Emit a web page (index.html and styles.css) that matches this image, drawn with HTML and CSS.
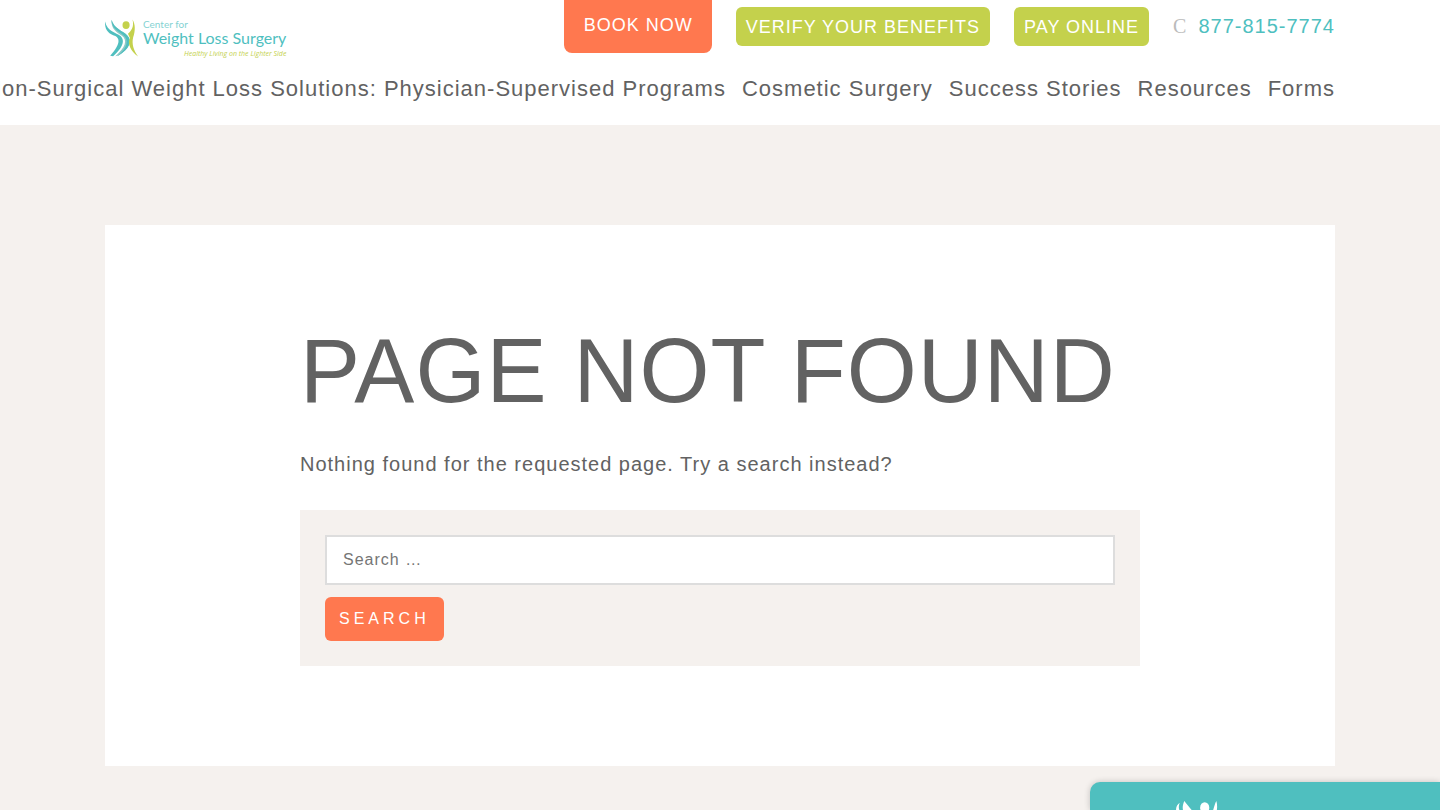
FILE: index.html
```html
<!DOCTYPE html>
<html lang="en">
	<head>
		<meta charset="utf-8">
		<title>Page Not Found</title>
		<link rel="stylesheet" href="styles.css">
	</head>
	<body>
		<header class="header">
			<div class="topbar">
				<a class="logo" href="#">
					<svg class="logo-mark" viewBox="0 0 105 120" aria-hidden="true">
						<path fill="#4fbfbf" d="M0 9C-1 38 12 46 32 54C50 64 42 86 16 115L25 116C52 94 64 69 48 54C34 42 8 42 0 9Z"/>
						<path fill="#8cc9c7" d="M20 4C18 32 36 43 51 52C72 66 62 90 32 116L42 114C74 94 86 70 69 52C56 39 28 32 20 4Z"/>
						<path fill="#4fbfbf" d="M20 4C20 28 38 39 54 49C76 64 70 90 38 116L42 114C74 94 86 70 69 52C56 39 28 32 20 4Z"/>
						<ellipse fill="#c4d14c" cx="65" cy="20" rx="11" ry="12"/>
						<path fill="#c4d14c" d="M85 3C91 28 80 38 71 47L77 60C68 78 80 102 102 117C88 98 82 78 87 58C94 38 94 18 85 3Z"/>
					</svg>
					<span class="logo-text">
						<span class="logo-small">Center for</span>
						<span class="logo-name">Weight Loss Surgery</span>
						<span class="logo-tag">Healthy Living on the Lighter Side</span>
					</span>
				</a>
				<div class="actions">
					<a class="book" href="#">BOOK NOW</a>
					<a class="pill" href="#">VERIFY YOUR BENEFITS</a>
					<a class="pill" href="#">PAY ONLINE</a>
					<a class="phone" href="#"><span class="phone-icon">C</span>877-815-7774</a>
				</div>
			</div>
			<nav class="nav">
				<a href="#">Non-Surgical Weight Loss Solutions: Physician-Supervised Programs</a>
				<a href="#">Cosmetic Surgery</a>
				<a href="#">Success Stories</a>
				<a href="#">Resources</a>
				<a href="#">Forms</a>
			</nav>
		</header>
		<main class="content">
			<div class="inner">
				<h1>PAGE NOT FOUND</h1>
				<p>Nothing found for the requested page. Try a search instead?</p>
				<form class="search">
					<input type="search" placeholder="Search …" aria-label="Search for">
					<button type="submit">SEARCH</button>
				</form>
			</div>
		</main>
		<aside class="chat">
			<svg class="chat-mark" viewBox="0 0 105 120" aria-hidden="true">
				<path fill="#fff" d="M11 4C-6 16 2 42 32 54C50 64 42 86 16 115L25 116C52 94 64 69 48 54C34 42 0 32 11 4Z"/>
				<path fill="#fff" d="M22 0C12 22 22 40 51 52C72 66 62 90 32 116L42 114C72 96 86 70 69 52C56 39 42 26 22 0Z"/>
				<ellipse fill="#fff" cx="71" cy="16" rx="11" ry="13"/>
				<path fill="#fff" d="M99 0C92 10 94 34 71 47L77 60C68 78 80 102 102 117C88 98 82 78 87 58C98 38 104 18 99 0Z"/>
			</svg>
		</aside>
	</body>
</html>
```
FILE: styles.css
```css
*{
	box-sizing: border-box;
}
body{
	margin: 0;
	min-height: 100vh;
	background-color: #f5f1ee;
	color: #626262;
	font-family: "Liberation Sans", Arial, sans-serif;
	font-size: 20px;
	letter-spacing: 1px;
	overflow-x: hidden;
}
a{
	color: inherit;
	text-decoration: none;
}
.header{
	background-color: #fff;
	padding: 0 105px 21px;
}
.topbar{
	display: flex;
	justify-content: space-between;
	align-items: flex-start;
}
.logo{
	display: flex;
	gap: 4px;
	margin-top: 18px;
	letter-spacing: 0;
	white-space: nowrap;
}
.logo-mark{
	width: 34px;
	height: 40px;
}
.logo-text{
	display: flex;
	flex-direction: column;
	font-family: Lato, sans-serif;
	color: #4fbfbf;
}
.logo-small{
	font-size: 10px;
	line-height: 12px;
	opacity: 0.7;
}
.logo-name{
	font-size: 16px;
	line-height: 16px;
}
.logo-tag{
	align-self: flex-end;
	font-family: "Open Sans", sans-serif;
	font-size: 7px;
	line-height: 16px;
	font-style: italic;
	color: #c4d14c;
}
.actions{
	display: flex;
	align-items: flex-start;
	gap: 24px;
	font-size: 18px;
	white-space: nowrap;
}
.book{
	padding: 13px 19px 16px 20px;
	line-height: 24px;
	background-color: #ff784f;
	color: #fff;
	border-radius: 0 0 8px 8px;
}
.pill{
	margin-top: 7px;
	padding: 8px 10px 7px;
	line-height: 24px;
	background-color: #c4d14c;
	color: #fff;
	border-radius: 6px;
}
.phone{
	margin-top: 7px;
	line-height: 39px;
	font-size: 20px;
	color: #4fbfbf;
}
.phone-icon{
	margin-right: 11px;
	font-family: "Liberation Serif", serif;
	color: #bbb;
}
.nav{
	display: flex;
	justify-content: flex-end;
	gap: 16px;
	margin-top: 12px;
	font-size: 22px;
	line-height: 30px;
	white-space: nowrap;
}
.content{
	margin: 100px 105px 44px;
	padding: 100px 20px;
	background-color: #fff;
}
.inner{
	max-width: 840px;
	margin: 0 auto;
}
h1{
	margin: 0;
	font-size: 90px;
	line-height: 92px;
	font-weight: normal;
}
p{
	margin: 32px 0 30px;
	line-height: 31px;
}
.search{
	padding: 25px;
	background-color: #f5f1ee;
}
.search input{
	display: block;
	width: 100%;
	height: 50px;
	margin-bottom: 12px;
	padding: 0 16px;
	border: 2px solid #ddd;
	background-color: #fff;
	font: inherit;
	font-size: 16px;
	letter-spacing: 1px;
	appearance: none;
}
.search button{
	display: block;
	height: 44px;
	padding: 0 14px;
	border: 0;
	border-radius: 6px;
	background-color: #ff784f;
	color: #fff;
	font: inherit;
	font-size: 16px;
	letter-spacing: 4px;
}
.chat{
	position: fixed;
	right: 0;
	bottom: 0;
	width: 350px;
	height: 28px;
	padding: 19px 0 0 85px;
	overflow: hidden;
	background-color: #4fbfbf;
	border-radius: 10px 0 0 0;
	box-shadow: 0 0 6px rgba(0, 0, 0, 0.2);
}
.chat-mark{
	display: block;
	width: 44px;
	height: 50px;
}
```
